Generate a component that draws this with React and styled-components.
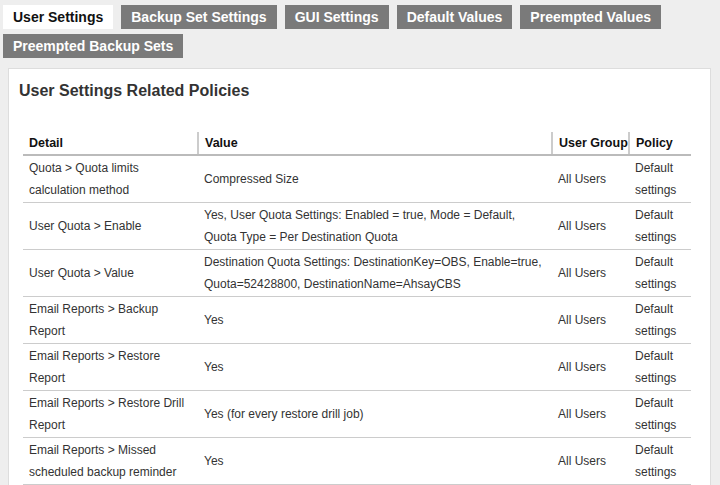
import React from 'react';
import styled, { createGlobalStyle } from 'styled-components';

const GlobalStyle = createGlobalStyle`
  body {
    margin: 0;
    background: #eeeeee;
    font-family: "Liberation Sans", Arial, sans-serif;
  }
`;

const tabs = [
  'User Settings',
  'Backup Set Settings',
  'GUI Settings',
  'Default Values',
  'Preempted Values',
  'Preempted Backup Sets',
];

const rows = [
  ['Quota > Quota limits calculation method', 'Compressed Size'],
  ['User Quota > Enable', 'Yes, User Quota Settings: Enabled = true, Mode = Default, Quota Type = Per Destination Quota'],
  ['User Quota > Value', 'Destination Quota Settings: DestinationKey=OBS, Enable=true, Quota=52428800, DestinationName=AhsayCBS'],
  ['Email Reports > Backup Report', 'Yes'],
  ['Email Reports > Restore Report', 'Yes'],
  ['Email Reports > Restore Drill Report', 'Yes (for every restore drill job)'],
  ['Email Reports > Missed scheduled backup reminder', 'Yes'],
];

const Page = () => {
  return (
    <>
      <GlobalStyle />
      <Tabs>
        {tabs.map((t, i) => (
          <Tab key={t} active={i === 0}>{t}</Tab>
        ))}
      </Tabs>
      <Panel>
        <Heading>User Settings Related Policies</Heading>
        <Table>
          <colgroup>
            <Col w={175} />
            <Col w={354} />
            <Col w={77} />
            <Col w={62} />
          </colgroup>
          <thead>
            <tr>
              <Th>Detail</Th>
              <Th>Value</Th>
              <Th>User Group</Th>
              <Th>Policy</Th>
            </tr>
          </thead>
          <tbody>
            {rows.map(([detail, value]) => (
              <tr key={detail}>
                <Td>{detail}</Td>
                <Td>{value}</Td>
                <Td>All Users</Td>
                <Td>Default settings</Td>
              </tr>
            ))}
          </tbody>
        </Table>
      </Panel>
    </>
  );
};

const Tabs = styled.div`
  display: flex;
  flex-wrap: wrap;
  gap: 5px 8px;
  padding: 5px 0 0 3px;
  width: 680px;
`;

const Tab = styled.div`
  height: 24px;
  line-height: 24px;
  padding: 0 10px;
  font-size: 14px;
  font-weight: bold;
  background: ${(p) => (p.active ? '#ffffff' : '#7a7a7a')};
  color: ${(p) => (p.active ? '#111111' : '#ffffff')};
  cursor: pointer;
`;

const Panel = styled.div`
  margin: 10px 0 0 8px;
  width: 703px;
  background: #ffffff;
  border: 1px solid #dddddd;
  padding: 12px 10px 0 10px;
  box-sizing: border-box;
  height: 430px;
`;

const Heading = styled.h2`
  margin: 0;
  font-size: 16px;
  line-height: 20px;
  font-weight: bold;
  color: #333333;
`;

const Table = styled.table`
  margin: 31px 0 0 4px;
  width: 668px;
  border-collapse: collapse;
  table-layout: fixed;
  font-size: 12px;
  color: #333333;
`;

const Col = styled.col`
  width: ${(p) => p.w}px;
`;

const Th = styled.th`
  text-align: left;
  font-size: 12.5px;
  font-weight: bold;
  color: #111111;
  height: 22px;
  padding: 0 6px;
  white-space: nowrap;
  border-bottom: 2px solid #bbbbbb;
  & + & {
    border-left: 2px solid #cccccc;
  }
`;

const Td = styled.td`
  padding: 0 5px 1px 6px;
  line-height: 22px;
  height: 45px;
  vertical-align: middle;
  border-bottom: 1px solid #cccccc;
`;

export default Page;
